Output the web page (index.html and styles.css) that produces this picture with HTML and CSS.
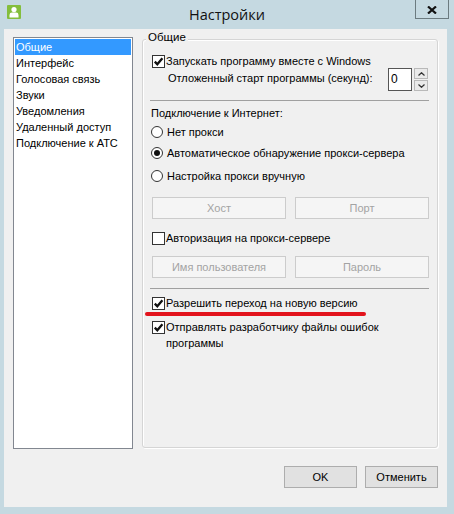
FILE: index.html
```html
<!DOCTYPE html>
<html lang="ru">
<head>
<meta charset="utf-8">
<title>Настройки</title>
<link rel="stylesheet" href="styles.css">
</head>
<body>
<div class="window">
  <div class="titlebar">
    <svg class="appicon" width="14" height="14" viewBox="0 0 14 14">
      <rect x="0" y="0" width="14" height="14" rx="1" fill="#84be3c"/>
      <circle cx="7" cy="4.6" r="2.6" fill="#fff"/>
      <path d="M2.5 12.5 V10 Q2.5 7.6 5 7.6 H9 Q11.5 7.6 11.5 10 V12.5 Z" fill="#fff"/>
    </svg>
    <div class="title">Настройки</div>
    <div class="close">
      <svg width="10" height="8" viewBox="0 0 10 8">
        <path d="M1 0.5 L9 7.5 M9 0.5 L1 7.5" stroke="#111" stroke-width="2.2" fill="none"/>
      </svg>
    </div>
  </div>
  <div class="client">
    <div class="main">
      <ul class="list">
        <li class="item sel">Общие</li>
        <li class="item">Интерфейс</li>
        <li class="item">Голосовая связь</li>
        <li class="item">Звуки</li>
        <li class="item">Уведомления</li>
        <li class="item">Удаленный доступ</li>
        <li class="item">Подключение к АТС</li>
      </ul>
      <div class="group">
        <span class="legend">Общие</span>
        <div class="row r-start">
          <span class="cb"><svg width="11" height="11" viewBox="0 0 11 11"><path d="M1.8 5.6 L4.3 8.2 L9.4 2.2" stroke="#111" stroke-width="2.3" fill="none"/></svg></span>
          <span class="lbl">Запускать программу вместе с Windows</span>
        </div>
        <div class="row r-delay">
          <span class="delay-text">Отложенный старт программы (секунд):</span>
          <div class="spin">
            <div class="spin-input">0</div>
            <div class="spin-btns">
              <div class="spin-btn"><svg width="7" height="4" viewBox="0 0 7 4"><path d="M0.5 3.5 L3.5 0.7 L6.5 3.5" stroke="#333" stroke-width="1.2" fill="none"/></svg></div>
              <div class="spin-btn"><svg width="7" height="4" viewBox="0 0 7 4"><path d="M0.5 0.5 L3.5 3.3 L6.5 0.5" stroke="#333" stroke-width="1.2" fill="none"/></svg></div>
            </div>
          </div>
        </div>
        <div class="sep sep1"></div>
        <div class="row r-net">Подключение к Интернет:</div>
        <div class="row radio-row rr1"><span class="radio"></span><span class="lbl2">Нет прокси</span></div>
        <div class="row radio-row rr2"><span class="radio on"></span><span class="lbl2">Автоматическое обнаружение прокси-сервера</span></div>
        <div class="row radio-row rr3"><span class="radio"></span><span class="lbl2">Настройка прокси вручную</span></div>
        <div class="btn-row br1">
          <div class="dbtn">Хост</div>
          <div class="dbtn">Порт</div>
        </div>
        <div class="row r-auth">
          <span class="cb"></span>
          <span class="lbl">Авторизация на прокси-сервере</span>
        </div>
        <div class="btn-row br2">
          <div class="dbtn">Имя пользователя</div>
          <div class="dbtn">Пароль</div>
        </div>
        <div class="sep sep2"></div>
        <div class="row r-upd">
          <span class="cb"><svg width="11" height="11" viewBox="0 0 11 11"><path d="M1.8 5.6 L4.3 8.2 L9.4 2.2" stroke="#111" stroke-width="2.3" fill="none"/></svg></span>
          <span class="lbl">Разрешить переход на новую версию</span>
        </div>
        <div class="row r-err">
          <span class="cb"><svg width="11" height="11" viewBox="0 0 11 11"><path d="M1.8 5.6 L4.3 8.2 L9.4 2.2" stroke="#111" stroke-width="2.3" fill="none"/></svg></span>
          <span class="lbl">Отправлять разработчику файлы ошибок</span>
        </div>
        <div class="row r-err2">программы</div>
        <div class="redline"></div>
      </div>
    </div>
    <div class="footer">
      <div class="btn">OK</div>
      <div class="btn">Отменить</div>
    </div>
  </div>
</div>
</body>
</html>
```

FILE: styles.css
```css
* { box-sizing: border-box; }
html, body { margin: 0; padding: 0; }
body {
  width: 454px;
  height: 514px;
  overflow: hidden;
  font-family: "Liberation Sans", Arial, sans-serif;
  font-size: 11px;
  color: #000;
}
.window {
  width: 454px;
  height: 514px;
  background: #c5d9e1;
  display: flex;
  flex-direction: column;
}
.titlebar {
  height: 29px;
  display: grid;
  grid-template-columns: 1fr auto 1fr;
  padding: 0 5px 0 7px;
}
.appicon { margin-top: 5px; display: block; }
.title {
  font-family: "Open Sans", "Noto Sans", sans-serif;
  font-size: 14.5px;
  line-height: 29px;
  color: #111;
  padding-right: 2px;
}
.close {
  justify-self: end;
  width: 34px;
  height: 19px;
  border: 1px solid #6c7b80;
  border-top: none;
  display: flex;
  align-items: center;
  justify-content: center;
  padding-top: 1px;
}
.close svg { display: block; }
.client {
  margin: 0 7px 7px 4px;
  height: 478px;
  background: #f0f0f0;
  padding: 8px 9px 0 9px;
}
.main {
  display: flex;
  gap: 9px;
  align-items: flex-start;
}
.list {
  list-style: none;
  margin: 0;
  width: 120px;
  height: 412px;
  border: 1px solid #828790;
  background: #fff;
  padding: 1px;
}
.item {
  height: 16px;
  line-height: 16px;
  padding-left: 1px;
  width: 116px;
  white-space: nowrap;
}
.item.sel { background: #3399ff; color: #fff; }
.group {
  position: relative;
  margin-top: 2px;
  width: 296px;
  height: 409px;
  border: 1px solid #d5d5d5;
  border-radius: 3px;
  box-shadow: 1px 1px 0 #fff, inset 1px 1px 0 #fff;
  padding: 0 8px 0 9px;
}
.legend {
  position: absolute;
  left: 3px;
  top: -10px;
  padding: 0 2px;
  line-height: 14px;
  background: #f0f0f0;
  font-size: 11.5px;
}
.row {
  display: flex;
  align-items: center;
  height: 16px;
  white-space: nowrap;
}
.cb {
  width: 13px;
  height: 13px;
  border: 1px solid #333;
  background: #fff;
  display: flex;
  align-items: center;
  justify-content: center;
  flex: none;
}
.cb svg { display: block; }
.lbl { margin-left: 1px; }
.r-start { margin-top: 14px; height: 14px; }
.r-delay { height: 23px; }
.delay-text { margin-left: 16px; padding-bottom: 3px; }
.spin { margin-left: auto; margin-right: 1px; display: flex; gap: 2px; }
.spin-input {
  width: 24px;
  height: 23px;
  border: 1px solid #555;
  background: #fff;
  padding-left: 2px;
  line-height: 21px;
  font-size: 12px;
}
.spin-btns { display: flex; flex-direction: column; }
.spin-btn {
  width: 14px;
  height: 11px;
  border: 1px solid #b9b9b9;
  background: #eaeaea;
  display: flex;
  align-items: center;
  justify-content: center;
}
.spin-btn + .spin-btn { margin-top: 1px; }
.spin-btn svg { display: block; }
.sep {
  height: 1px;
  background: #a0a0a0;
  margin-left: -2px;
}
.sep1 { margin-top: 9px; }
.r-net { margin-top: 4px; margin-left: -1px; }
.radio-row { margin-left: -1px; }
.rr1 { margin-top: 3px; }
.rr2 { margin-top: 5px; }
.rr3 { margin-top: 7px; }
.radio {
  width: 12px;
  height: 12px;
  border: 1px solid #333;
  border-radius: 50%;
  background: #fff;
  flex: none;
  display: flex;
  align-items: center;
  justify-content: center;
}
.radio.on::after {
  content: "";
  width: 6px;
  height: 6px;
  border-radius: 50%;
  background: #111;
}
.lbl2 { margin-left: 4px; }
.btn-row {
  display: flex;
  gap: 9px;
  height: 22px;
}
.br1 { margin-top: 13px; }
.br2 { margin-top: 10px; }
.dbtn {
  width: 134px;
  height: 22px;
  border: 1px solid #cccccc;
  background: #f5f5f5;
  color: #a3a3a3;
  text-align: center;
  line-height: 20px;
}
.r-auth { margin-top: 11px; }
.sep2 { margin-top: 10px; }
.r-upd { margin-top: 6px; }
.r-err { margin-top: 8px; }
.r-err2 { padding-left: 14px; }
.redline {
  position: absolute;
  left: 2px;
  top: 272px;
  width: 221px;
  height: 4px;
  border-radius: 2px;
  background: #e2131c;
}
.footer {
  display: flex;
  justify-content: flex-end;
  gap: 8px;
  margin-top: 17px;
}
.btn {
  width: 73px;
  height: 22px;
  border: 1px solid #adadad;
  background: #e1e1e1;
  text-align: center;
  line-height: 20px;
}
```
